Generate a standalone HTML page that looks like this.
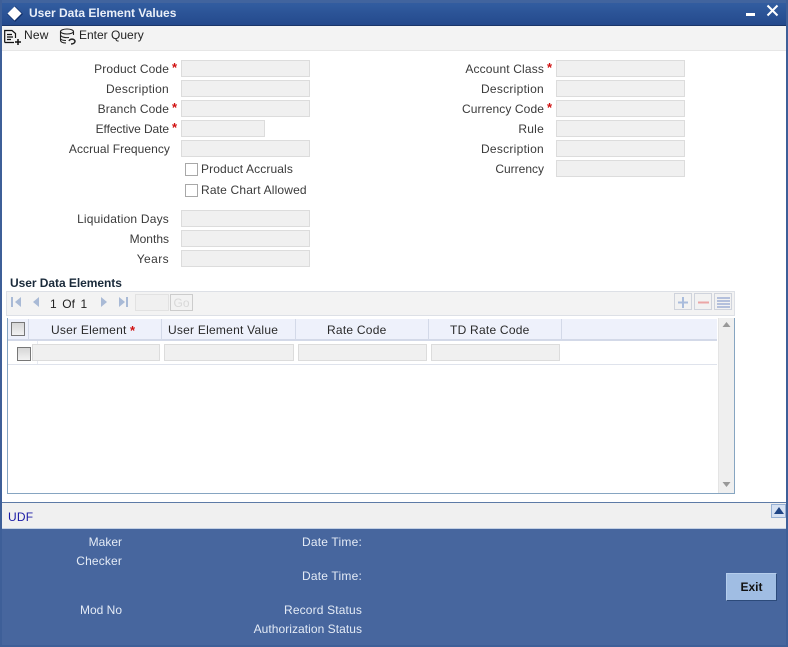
<!DOCTYPE html>
<html><head><meta charset="utf-8">
<style>
html,body{margin:0;padding:0;background:#fff}
#w{position:relative;width:788px;height:647px;overflow:hidden;background:#fff;font:12px/14px "Liberation Sans",Arial,sans-serif;color:#3a3a3a}
#w div,#w svg{position:absolute;box-sizing:border-box}
.l{text-align:right;white-space:nowrap;height:14px;letter-spacing:.12px}
.d{letter-spacing:.27px}
.f{background:#f0f0f0;border:1px solid #dcdcdc;height:17px;width:129px}
.s{color:#d01010;font-weight:bold;white-space:nowrap;font-size:13px}
.c{width:13px;height:13px;border:1px solid #a8a8a8;background:#fff}
.t{white-space:nowrap}
.h{top:319px;height:22px;background:#eef1fb;border-right:1px solid #d3d9e8;border-bottom:2px solid #d3d9e8;text-align:left;line-height:22px;color:#2a2a2a;letter-spacing:.24px;white-space:nowrap}
.b{color:#e4ebf6;text-align:right;white-space:nowrap;height:14px;letter-spacing:.15px}
.cb{background:linear-gradient(#d6d6d6,#f2f2f2);border:1px solid #777;width:14px;height:14px}
.ib{top:293px;width:18px;height:17px;border:1px solid #cfd3dc;background:#f2f2f2}
</style></head><body><div id="w">
<div style="left:0;top:0;width:788px;height:3px;background:#41649e"></div>
<div style="left:0;top:3px;width:788px;height:23px;background:linear-gradient(#325da0,#24498c);border-bottom:1px solid #1a3568"></div>
<svg style="left:6px;top:5px" width="18" height="18" viewBox="0 0 18 18"><path d="M9 1L17 9L9 17L1 9Z" fill="#12306a"/><path d="M8.500 1.500L15.500 8.500L8.500 15.500L1.500 8.500Z" fill="#fff"/></svg>
<div class="t" style="left:29px;top:6px;color:#e9eff8;font-weight:bold;line-height:15px;font-size:12px">User Data Element Values</div>
<div style="left:746px;top:13px;width:9px;height:3px;background:#fff"></div>
<svg style="left:766px;top:4px" width="13" height="13" viewBox="0 0 13 13"><path d="M1.500 1.500L11.500 11.500M11.500 1.500L1.500 11.500" stroke="#fff" stroke-width="2"/></svg>

<div style="left:0;top:26px;width:788px;height:25px;background:#f3f3f3;border-bottom:1px solid #e6e6e6"></div>
<svg style="left:4px;top:28px" width="18" height="17" viewBox="0 0 18 17" fill="none" stroke="#111" stroke-width="1.200"><path d="M.7 14.500V2.500H8L11.500 5.500V10M.7 14.500H10M3 6.500H8M3 9H9M3 11.500H7"/><path d="M11 14H17M14 11V17" stroke-width="1.500"/></svg>
<div class="t" style="left:24px;top:28px;color:#222;letter-spacing:.2px">New</div>
<svg style="left:59px;top:28px" width="18" height="17" viewBox="0 0 18 17" fill="none" stroke="#222" stroke-width="1.100"><ellipse cx="8" cy="3.500" rx="6.500" ry="2.500"/><path d="M1.500 3.500V12C1.500 14 4 15 7 15M14.500 3.500V7M1.500 7C2 9 6 10 10 9.500M1.500 10.500C2 12 4 12.500 7 12.500"/><path d="M10 13C11 10.500 15 10.500 16 13C16 15 14 16 12 16" stroke-width="1.500"/></svg>
<div class="t" style="left:79px;top:28px;color:#222">Enter Query</div>

<div class="l" style="right:619px;top:62px">Product Code</div><div class="s" style="left:172px;top:61px">*</div><div class="f" style="left:181px;top:60px"></div>
<div class="l d" style="right:619px;top:82px">Description</div><div class="f" style="left:181px;top:80px"></div>
<div class="l" style="right:619px;top:102px">Branch Code</div><div class="s" style="left:172px;top:101px">*</div><div class="f" style="left:181px;top:100px"></div>
<div class="l" style="right:619px;top:122px;letter-spacing:-.08px">Effective Date</div><div class="s" style="left:172px;top:121px">*</div><div class="f" style="left:181px;top:120px;width:84px"></div>
<div class="l" style="right:618px;top:142px;letter-spacing:.06px">Accrual Frequency</div><div class="f" style="left:181px;top:140px"></div>
<div class="c" style="left:185px;top:163px"></div><div class="t" style="left:201px;top:162px;letter-spacing:.12px">Product Accruals</div>
<div class="c" style="left:185px;top:184px"></div><div class="t" style="left:201px;top:183px;letter-spacing:.17px">Rate Chart Allowed</div>
<div class="l" style="right:619px;top:212px;letter-spacing:.2px">Liquidation Days</div><div class="f" style="left:181px;top:210px"></div>
<div class="l" style="right:619px;top:232px;letter-spacing:0">Months</div><div class="f" style="left:181px;top:230px"></div>
<div class="l" style="right:619px;top:252px;letter-spacing:.4px">Years</div><div class="f" style="left:181px;top:250px"></div>

<div class="l" style="right:244px;top:62px;letter-spacing:.15px">Account Class</div><div class="s" style="left:547px;top:61px">*</div><div class="f" style="left:556px;top:60px"></div>
<div class="l d" style="right:244px;top:82px">Description</div><div class="f" style="left:556px;top:80px"></div>
<div class="l" style="right:244px;top:102px;letter-spacing:.1px">Currency Code</div><div class="s" style="left:547px;top:101px">*</div><div class="f" style="left:556px;top:100px"></div>
<div class="l" style="right:244px;top:122px;letter-spacing:.25px">Rule</div><div class="f" style="left:556px;top:120px"></div>
<div class="l d" style="right:244px;top:142px">Description</div><div class="f" style="left:556px;top:140px"></div>
<div class="l" style="right:244px;top:162px;letter-spacing:0">Currency</div><div class="f" style="left:556px;top:160px"></div>

<div class="t" style="left:10px;top:276px;font-weight:bold;color:#1a2a3a;letter-spacing:-.05px">User Data Elements</div>
<div style="left:6px;top:291px;width:729px;height:25px;background:#f3f3f3;border:1px solid #dde0e6"></div>
<svg style="left:10px;top:296px" width="125" height="13" viewBox="0 0 125 13"><g fill="#a9bad6"><rect x="1" y="1" width="2" height="10"/><path d="M11 1L5 6L11 11Z"/><path d="M29 1L23 6L29 11Z"/><path d="M91 1L97 6L91 11Z"/><path d="M109 1L115 6L109 11Z"/><rect x="116" y="1" width="2" height="10"/></g></svg>
<div class="t" style="left:50px;top:297px;color:#222;word-spacing:2px;letter-spacing:.1px">1 Of 1</div>
<div style="left:135px;top:294px;width:34px;height:17px;background:#f0f0f0;border:1px solid #e2e2e2"></div>
<div style="left:170px;top:294px;width:23px;height:17px;background:#f2f2f2;border:1px solid #ccc;color:#d8d8d8;text-align:center;line-height:16px">Go</div>
<div class="ib" style="left:674px"></div>
<svg style="left:676px;top:295px" width="14" height="14"><path d="M7 2V13M2 7.500H12" stroke="#a9bcdc" stroke-width="2"/></svg>
<div class="ib" style="left:694px"></div>
<svg style="left:696px;top:295px" width="14" height="14"><path d="M2 7.500H13" stroke="#eba5a5" stroke-width="2"/></svg>
<div class="ib" style="left:714px"></div>
<svg style="left:716px;top:295px" width="15" height="14"><path d="M1 3H14M1 6H14M1 9H14M1 12H14" stroke="#b4c0dc" stroke-width="2"/></svg>

<div style="left:7px;top:318px;width:728px;height:176px;background:#fff;border:1px solid #86a5c1;border-top:0"></div>
<div style="left:7px;top:318px;width:1px;height:12px;background:#86a5c1"></div>
<div class="h" style="left:8px;width:21px"></div>
<div class="c cb" style="left:11px;top:322px"></div>
<div class="h" style="left:29px;width:133px;padding-left:22px">User Element</div>
<div class="s" style="left:130px;top:324px;font-weight:bold">*</div>
<div class="h" style="left:162px;width:134px;padding-left:6px">User Element Value</div>
<div class="h" style="left:296px;width:133px;padding-left:31px">Rate Code</div>
<div class="h" style="left:429px;width:133px;padding-left:21px">TD Rate Code</div>
<div class="h" style="left:562px;width:155px;border-right:0"></div>
<div style="left:8px;top:364px;width:709px;height:1px;background:#dfe3ec"></div>
<div style="left:37px;top:341px;width:1px;height:23px;background:#e8ebf2"></div>
<div class="c cb" style="left:17px;top:347px"></div>
<div class="f" style="left:32px;top:344px;width:128px"></div>
<div class="f" style="left:164px;top:344px;width:130px"></div>
<div class="f" style="left:298px;top:344px;width:129px"></div>
<div class="f" style="left:431px;top:344px;width:129px"></div>
<div style="left:718px;top:318px;width:16px;height:175px;background:#efefef;border-left:1px solid #e4e4e4"></div>
<svg style="left:722px;top:321px" width="9" height="7"><path d="M4.500 1L8.500 6H.5Z" fill="#999"/></svg>
<svg style="left:722px;top:481px" width="9" height="7"><path d="M.5 1H8.500L4.500 6Z" fill="#999"/></svg>

<div style="left:2px;top:502px;width:784px;height:27px;background:#f0f0f0;border-top:1px solid #5d7aa6;border-bottom:1px solid #c3d0e4"></div>
<div class="t" style="left:8px;top:510px;color:#1a1aa6;letter-spacing:.2px">UDF</div>
<div style="left:771px;top:504px;width:15px;height:14px;background:#d6e1f2;border:1px solid #96b0d4"></div>
<svg style="left:773px;top:507px" width="12" height="8"><path d="M6 0L11 7H1Z" fill="#1f4586"/></svg>

<div style="left:2px;top:529px;width:784px;height:116px;background:#47669e"></div>
<div class="b" style="right:666px;top:535px;letter-spacing:0">Maker</div>
<div class="b" style="right:666px;top:554px">Checker</div>
<div class="b" style="right:666px;top:603px;letter-spacing:0">Mod No</div>
<div class="b" style="right:426px;top:535px;letter-spacing:.2px">Date Time:</div>
<div class="b" style="right:426px;top:569px;letter-spacing:.2px">Date Time:</div>
<div class="b" style="right:426px;top:603px">Record Status</div>
<div class="b" style="right:426px;top:622px;letter-spacing:.05px">Authorization Status</div>
<div style="left:726px;top:573px;width:51px;height:28px;background:#a0bde3;border:1px solid #b5cdec;border-right-color:#2c4a7a;border-bottom-color:#2c4a7a;color:#111;font-weight:bold;text-align:center;line-height:26px">Exit</div>

<div style="left:0;top:0;width:2px;height:647px;background:#3e5f98"></div>
<div style="left:786px;top:0;width:2px;height:647px;background:#3e5f98"></div>
<div style="left:0;top:645px;width:788px;height:2px;background:#3e5f98"></div>
</div></body></html>
